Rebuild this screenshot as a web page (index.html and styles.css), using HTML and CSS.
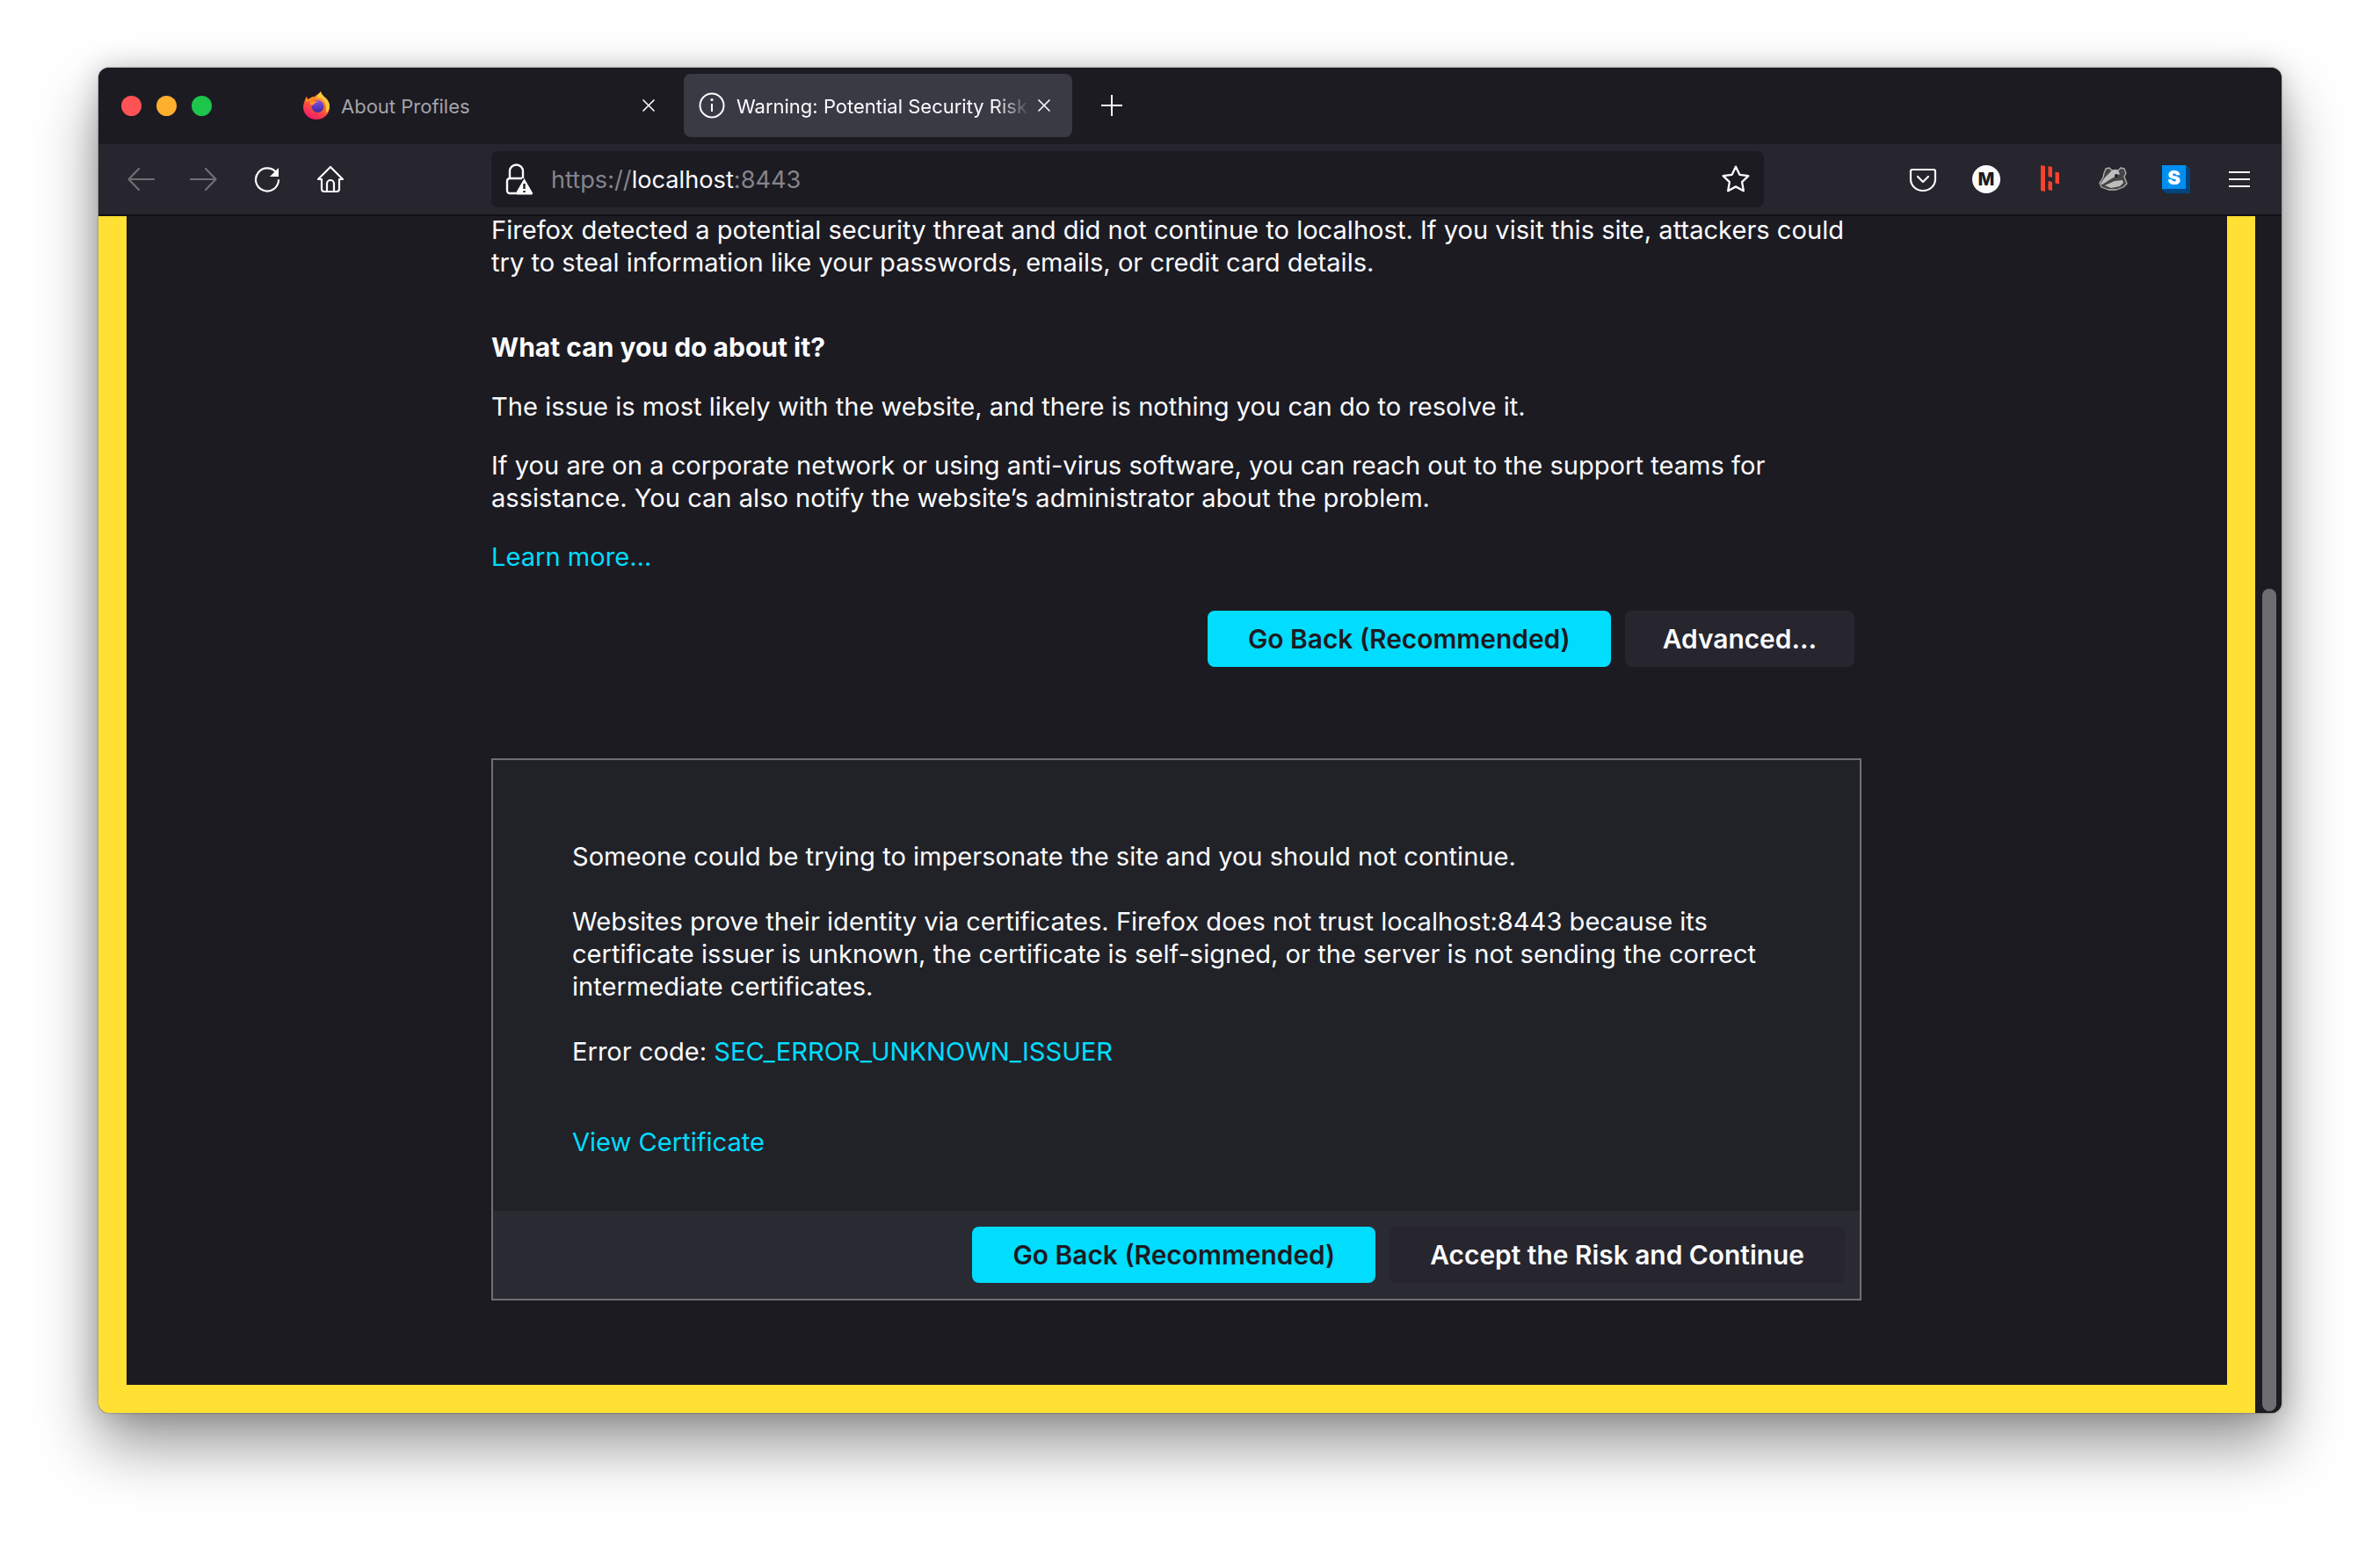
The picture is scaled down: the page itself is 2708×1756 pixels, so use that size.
FILE: index.html
```html
<!DOCTYPE html>
<html lang="en">
<head>
  <meta charset="UTF-8" />
  <title>Warning: Potential Security Risk Ahead</title>
  <link rel="stylesheet" href="styles.css">
</head>
<body>
  <div class="window">

    <div class="titlebar">
      <div class="lights">
        <span class="light red"></span>
        <span class="light amber"></span>
        <span class="light green"></span>
      </div>
      <div class="tabs">
        <div class="tab">
          <svg class="tab-icon" viewBox="0 0 32 32">
            <defs>
              <linearGradient id="ffbody" x1="0.8" y1="0" x2="0.3" y2="1">
                <stop offset="0" stop-color="#ffd23a"/>
                <stop offset="0.45" stop-color="#ff6a2b"/>
                <stop offset="1" stop-color="#f5156c"/>
              </linearGradient>
              <linearGradient id="ffeye" x1="0.5" y1="0" x2="0.5" y2="1">
                <stop offset="0" stop-color="#8a4fe0"/>
                <stop offset="1" stop-color="#3d2a9c"/>
              </linearGradient>
            </defs>
            <path fill="url(#ffbody)" d="M21 0c0 3 3 5 6 8 3 3 4 6 4 10 0 8-7 14-15 14S1 26 1 18c0-3 1-6 2-8 0-2 1-3 2-4 0 2 1 3 2 3 2-2 5-3 7-3 2-2 6-4 7-6z"/>
            <path fill="#ffc73a" d="M21 0c0 3 3 5 6 8 3 3 4 6 4 10-1 3-2 5-4 7 1-7-1-14-5-17-2-1-4-1-6 0 1-3 4-6 5-8z"/>
            <path fill="#ff8a1f" d="M5 6c0 2 1 3 2 3 2-2 5-3 7-3 1 1-1 4-3 5-2 0-5 1-7 1-1-1 0-4 1-6z"/>
            <circle cx="17.500" cy="17" r="7" fill="url(#ffeye)"/>
            <path fill="#ff9a2b" d="M8 13c3-2 8-2 11-1-3 0-5 1-6 3-2 1-4 0-5-2z"/>
          </svg>
          <span class="tab-title">About Profiles</span>
          <span class="tab-close">
            <svg viewBox="0 0 16 16"><path d="M1.5 1.5l13 13M14.5 1.5l-13 13"/></svg>
          </span>
        </div>
        <div class="tab active">
          <svg class="tab-icon line" viewBox="0 0 32 32">
            <circle cx="16" cy="16" r="13.5"/>
            <path d="M16 14v9"/>
            <circle class="dot" cx="16" cy="9.5" r="1.6"/>
          </svg>
          <span class="tab-title fade">Warning: Potential Security Risk Ahead</span>
          <span class="tab-close">
            <svg viewBox="0 0 16 16"><path d="M1.5 1.5l13 13M14.5 1.5l-13 13"/></svg>
          </span>
        </div>
        <span class="new-tab">
          <svg viewBox="0 0 24 24"><path d="M12 0v24M0 12h24"/></svg>
        </span>
      </div>
    </div>

    <div class="toolbar">
      <span class="tool dim"><svg viewBox="0 0 32 32"><path d="M31 16H3M14 4L2.500 16 14 28"/></svg></span>
      <span class="tool dim"><svg viewBox="0 0 32 32"><path d="M1 16h28M18 4l11.500 12L18 28"/></svg></span>
      <span class="tool"><svg viewBox="0 0 32 32"><path d="M27 9.500A13 13 0 1 0 29 17"/><path class="solid" d="M29 3v10H19z"/></svg></span>
      <span class="tool"><svg viewBox="0 0 32 32"><path d="M16 2L2 16h4v11a3 3 0 0 0 3 3h14a3 3 0 0 0 3-3V16h4z"/><path d="M12 30v-9a4 4 0 0 1 8 0v9"/></svg></span>

      <div class="urlbar">
        <svg class="lock" viewBox="0 0 32 36">
          <path d="M5 17V9a7.500 7.500 0 0 1 15 0v8"/>
          <path d="M12 34H5a3 3 0 0 1-3-3V20a3 3 0 0 1 3-3h14"/>
          <path class="solid" d="M21.500 17L31 33.500a1.500 1.500 0 0 1-1.300 2H13.300a1.500 1.500 0 0 1-1.300-2z"/>
          <path class="cut" d="M21.500 23v6M21.500 31v2"/>
        </svg>
        <span class="url"><span class="url-dim">https://</span>localhost<span class="url-dim">:8443</span></span>
        <svg class="star" viewBox="0 0 32 32"><path d="M16 2.500l4.100 8.600 9.400 1.300-6.800 6.600 1.600 9.400-8.300-4.500-8.300 4.500 1.600-9.400-6.800-6.600 9.400-1.300z"/></svg>
      </div>

      <div class="extensions">
        <span class="tool"><svg viewBox="0 0 32 32"><path d="M4 5h24a2 2 0 0 1 2 2v9a14 13 0 0 1-28 0V7a2 2 0 0 1 2-2z"/><path d="M10 13l6 6 6-6"/></svg></span>
        <span class="tool"><span class="ext-m">M</span></span>
        <span class="tool"><svg class="big" viewBox="0 0 48 48"><path class="red" d="M14 8l5 1v29l-5-1zM22.500 9l4.500 1v12l-4.500-1zM22.500 26l4.500 1v10l-4.500-1zM30.500 15.500l4.500 1v13l-4.500-1z"/></svg></span>
        <span class="tool">
          <svg class="big" viewBox="0 0 48 48">
            <path class="badger" d="M14 17l2-5 4-1 3 3c3-1 5-1 7 0l3-3 4 1 2 5-2 4 3 8-4 4-8 3H19l-8-3-2-5 4-6z"/>
            <path class="badger-light" d="M23 14l7 0 2 4-9 5-11 7-2-1 5-7z"/>
            <circle class="badger-dark" cx="28" cy="20" r="2"/>
            <path class="badger-light" d="M15 31l11-5 9-1 1 3-4 4-10 2z"/>
          </svg>
        </span>
        <span class="tool"><span class="ext-s"><span class="ext-s-face">S</span></span></span>
        <span class="tool menu"><i></i><i></i><i></i></span>
      </div>
    </div>

    <div class="page">
      <div class="frame">
        <div class="content">
          <p>Firefox detected a potential security threat and did not continue to localhost. If you visit this site, attackers could try to steal information like your passwords, emails, or credit card details.</p>
          <h3>What can you do about it?</h3>
          <p>The issue is most likely with the website, and there is nothing you can do to resolve it.</p>
          <p>If you are on a corporate network or using anti-virus software, you can reach out to the support teams for assistance. You can also notify the website’s administrator about the problem.</p>
          <p><a href="#">Learn more…</a></p>

          <div class="actions">
            <button class="primary">Go Back (Recommended)</button>
            <button>Advanced…</button>
          </div>

          <div class="advanced">
            <div class="advanced-body">
              <p>Someone could be trying to impersonate the site and you should not continue.</p>
              <p>Websites prove their identity via certificates. Firefox does not trust localhost:8443 because its certificate issuer is unknown, the certificate is self-signed, or the server is not sending the correct intermediate certificates.</p>
              <p>Error code: <a href="#">SEC_ERROR_UNKNOWN_ISSUER</a></p>
              <p class="view-cert"><a href="#">View Certificate</a></p>
            </div>
            <div class="advanced-foot">
              <button class="primary">Go Back (Recommended)</button>
              <button>Accept the Risk and Continue</button>
            </div>
          </div>
        </div>
      </div>
      <div class="scrollbar"><div class="thumb"></div></div>
    </div>

  </div>
</body>
</html>
```

FILE: styles.css
```css
html, body {
  height: 100%;
}
body {
  margin: 0;
  padding: 77px 112px 148px;
  box-sizing: border-box;
  background: #fff;
  overflow: hidden;
  font-family: Inter, "Liberation Sans", sans-serif;
  color: #fbfbfe;
}
.window {
  height: 100%;
  display: flex;
  flex-direction: column;
  background: #1c1b22;
  border-radius: 12px;
  overflow: hidden;
  box-shadow: 0 36px 70px rgba(0,0,0,0.42), 0 0 30px rgba(0,0,0,0.18), 0 0 2px rgba(0,0,0,0.5);
}

/* title bar */
.titlebar {
  display: flex;
  align-items: center;
  height: 87px;
  box-sizing: border-box;
  padding: 7px 0 8px 26px;
  background: #1c1b22;
}
.lights {
  display: flex;
  gap: 17px;
}
.light {
  width: 23px;
  height: 23px;
  border-radius: 50%;
}
.red { background: #ff5255; }
.amber { background: #ffb02f; }
.green { background: #1dc54b; }
.tabs {
  display: flex;
  align-items: center;
  gap: 8px;
  margin-left: 87px;
}
.tab {
  display: flex;
  align-items: center;
  width: 442px;
  height: 72px;
  box-sizing: border-box;
  padding: 0 16px;
  border-radius: 8px;
  font-size: 22px;
  color: #a3a3ab;
}
.tab.active {
  background: #3a3a45;
  color: #fbfbfe;
}
.tab-icon {
  width: 32px;
  height: 32px;
  flex: none;
  margin-right: 12px;
}
.tab-icon.line {
  fill: none;
  stroke: #fbfbfe;
  stroke-width: 2;
}
.tab-icon .dot {
  fill: #fbfbfe;
  stroke: none;
}
.tab-title {
  flex: 1;
  padding-top: 2px;
  white-space: nowrap;
  overflow: hidden;
}
.tab-title.fade {
  -webkit-mask-image: linear-gradient(to right, #000 88%, transparent 100%);
  mask-image: linear-gradient(to right, #000 88%, transparent 100%);
}
.tab-close {
  display: flex;
  align-items: center;
  justify-content: center;
  width: 32px;
  height: 32px;
  flex: none;
}
.tab-close svg {
  width: 16px;
  height: 16px;
  fill: none;
  stroke: #fbfbfe;
  stroke-width: 1.6;
}
.new-tab {
  display: flex;
  margin-left: 13px;
  padding: 0 12px;
}
.new-tab svg {
  width: 24px;
  height: 24px;
  fill: none;
  stroke: #fbfbfe;
  stroke-width: 2;
}

/* toolbar */
.toolbar {
  display: flex;
  align-items: center;
  height: 80px;
  flex: none;
  padding: 0 24px;
  background: #27262e;
  border-bottom: 2px solid #111115;
}
.tool {
  display: flex;
  align-items: center;
  justify-content: center;
  width: 48px;
  height: 48px;
  flex: none;
  margin-right: 24px;
}
.tool:last-child {
  margin-right: 0;
}
.tool svg {
  width: 32px;
  height: 32px;
  fill: none;
  stroke: #fbfbfe;
  stroke-width: 2.2;
  stroke-linecap: round;
  stroke-linejoin: round;
}
.tool svg.big {
  width: 48px;
  height: 48px;
  flex: none;
}
.tool svg .solid {
  fill: #fbfbfe;
  stroke: none;
}
.tool.dim svg {
  stroke: #6f6e75;
}
.tool svg .red {
  fill: #f7432a;
  stroke: none;
}
.tool svg .badger {
  fill: #454545;
  stroke: #b0b0b0;
  stroke-width: 1.3;
}
.tool svg .badger-dark {
  fill: #222;
  stroke: none;
}
.tool svg .badger-light {
  fill: #bdbdbd;
  stroke: none;
}
.urlbar {
  display: flex;
  align-items: center;
  width: 1448px;
  height: 64px;
  box-sizing: border-box;
  margin-left: 135px;
  padding: 0 15px 0 16px;
  background: #1c1b22;
  border-radius: 8px;
}
.lock {
  width: 32px;
  height: 36px;
  flex: none;
  fill: none;
  stroke: #fbfbfe;
  stroke-width: 2.4;
}
.lock .solid {
  fill: #fbfbfe;
  stroke: none;
}
.lock .cut {
  stroke: #1c1b22;
  stroke-width: 2.4;
}
.url {
  flex: 1;
  margin-left: 20px;
  font-size: 27.2px;
}
.url-dim {
  color: #84848a;
}
.star {
  width: 34px;
  height: 34px;
  flex: none;
  fill: none;
  stroke: #fbfbfe;
  stroke-width: 2.2;
  stroke-linejoin: round;
}
.extensions {
  display: flex;
  align-items: center;
  margin-left: auto;
}
.ext-m {
  display: flex;
  align-items: center;
  justify-content: center;
  width: 32px;
  height: 32px;
  border-radius: 50%;
  background: #fbfbfe;
  color: #1c1b22;
  font-size: 20px;
  font-weight: 800;
}
.ext-s {
  display: block;
  width: 32px;
  height: 32px;
  background: linear-gradient(135deg, #00549a 50%, #00447f 50%);
  clip-path: polygon(0 0, 84% 0, 100% 14%, 100% 100%, 14% 100%, 0 84%);
}
.ext-s-face {
  display: flex;
  align-items: center;
  justify-content: center;
  width: 27px;
  height: 27px;
  background: #008fef;
  color: #fff;
  font-size: 22px;
  font-weight: 900;
}
.menu {
  flex-direction: column;
  gap: 6px;
}
.menu i {
  display: block;
  width: 24px;
  height: 2px;
  background: #fbfbfe;
}

/* page */
.page {
  display: flex;
  flex: 1;
  min-height: 0;
}
.frame {
  flex: 1;
  min-width: 0;
  box-sizing: border-box;
  border: 32px solid #ffe033;
  border-top: none;
  background: #1c1b22;
  overflow: hidden;
}
.content {
  width: 1559px;
  margin: -3px 0 0 415px;
  font-size: 29.1px;
  line-height: 37px;
}
.content p {
  margin: 0 0 30px;
}
.content h3 {
  margin: 60px 0 30px;
  font-size: 30px;
  line-height: inherit;
  font-weight: 700;
}
.content a {
  color: #00ddff;
  text-decoration: none;
}
.actions {
  display: flex;
  justify-content: flex-end;
  gap: 16px;
  margin: 43px 8px 104px 0;
}
.actions button:last-child {
  padding: 0 43px;
}
button {
  height: 64px;
  padding: 0 46px;
  border: none;
  border-radius: 8px;
  background: #27262e;
  color: #fbfbfe;
  font: 600 29.9px Inter, "Liberation Sans", sans-serif;
}
button.primary {
  background: #00ddff;
  color: #1c1b22;
}
.advanced {
  border: 2px solid #6f6f78;
  background: #202228;
}
.advanced-body {
  padding: 91px 90px 60px 90px;
}
.advanced-body p {
  margin-bottom: 37px;
}
.advanced-body p:last-child {
  margin-bottom: 0;
}
.advanced-body .view-cert {
  margin-top: 66px;
}
.advanced-foot {
  display: flex;
  justify-content: flex-end;
  gap: 16px;
  padding: 18px 17px;
  background: #2a2a33;
}
.advanced-foot button:last-child {
  background: #27262e;
}

/* scrollbar */
.scrollbar {
  display: flex;
  flex-direction: column;
  justify-content: flex-end;
  width: 30px;
  flex: none;
  box-sizing: border-box;
  padding: 0 6px 2px 8px;
  background: #1c1b22;
}
.thumb {
  height: 936px;
  border-radius: 8px;
  background: #6e6e72;
}
```
